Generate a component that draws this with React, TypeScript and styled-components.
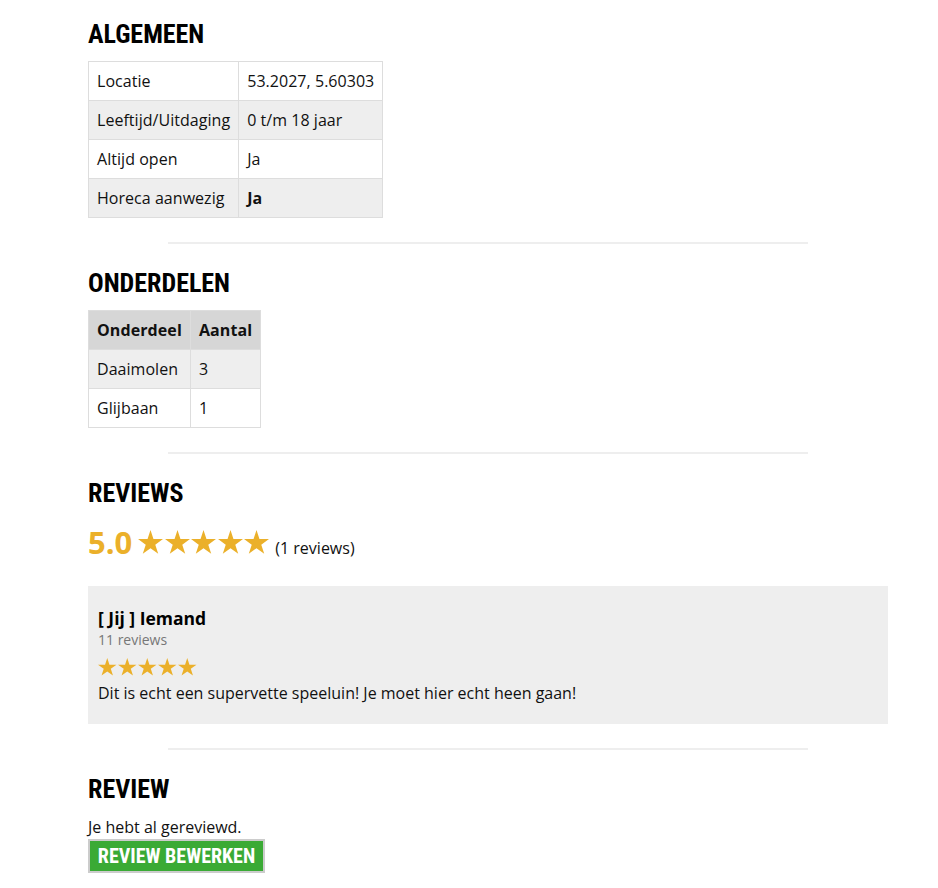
import React from "react";
import styled, { createGlobalStyle } from "styled-components";

const GlobalStyle = createGlobalStyle`
  html, body { margin: 0; padding: 0; background: #fff; }
  body {
    font-family: "Open Sans", "Liberation Sans", sans-serif;
    font-size: 16px;
    line-height: 22px;
    color: #111;
  }
`;

const Page = styled.div`
  width: 800px;
  padding: 19px 88px 20px;
`;

const Heading = styled.h2`
  margin: 0 0 12px;
  font-family: "Roboto Condensed", Roboto, "Liberation Sans", sans-serif;
  font-stretch: condensed;
  font-weight: 700;
  font-size: 26px;
  line-height: 30px;
  color: #000;
  text-transform: uppercase;
`;

const Divider = styled.hr`
  width: 640px;
  margin: 24px auto 24px;
  border: 0;
  border-top: 2px solid #eee;
  height: 0;
`;

const Table = styled.table`
  border-collapse: collapse;
  letter-spacing: 0.04px;
`;

const Row = styled.tr<{ $shade?: "none" | "light" | "dark" }>`
  background: ${(p) =>
    p.$shade === "light" ? "#eee" : p.$shade === "dark" ? "#d6d6d6" : "#fff"};
`;

const Cell = styled.td<{ $bold?: boolean }>`
  border: 1px solid #ddd;
  padding: 8px;
  font-weight: ${(p) => (p.$bold ? 700 : 400)};
  white-space: nowrap;
`;

const HeadCell = styled.th`
  border: 1px solid #ddd;
  padding: 8px;
  font-weight: 700;
  text-align: left;
  letter-spacing: 0.1px;
`;

const RatingRow = styled.div`
  display: flex;
  align-items: baseline;
  margin: 14px 0 18px;
  line-height: 40px;
`;

const Score = styled.span`
  font-size: 31px;
  font-weight: 700;
  color: #ebb02a;
  margin-right: 6px;
`;

const Stars = styled.span<{ $gap: number }>`
  display: inline-flex;
  gap: ${(p) => p.$gap}px;
`;

const Count = styled.span`
  margin-left: 6px;
  font-size: 16px;
`;

const ReviewBox = styled.div`
  background: #eee;
  padding: 20px 10px;
`;

const ReviewerName = styled.div`
  font-size: 17.5px;
  line-height: 24px;
  font-weight: 700;
  color: #000;
`;

const ReviewerCount = styled.div`
  font-size: 14px;
  line-height: 20px;
  color: #777;
`;

const ReviewStars = styled.div`
  margin: 8px 0 7px;
  display: flex;
  height: 17px;
`;

const ReviewText = styled.p`
  margin: 0;
`;

const Note = styled.p`
  margin: 0;
`;

const Button = styled.button`
  display: block;
  margin-top: 1px;
  height: 34px;
  width: 177px;
  padding: 0;
  background: #3aaa35;
  border: 2px solid #ccc;
  color: #fff;
  font-family: "Roboto Condensed", Roboto, "Liberation Sans", sans-serif;
  font-stretch: condensed;
  font-weight: 700;
  font-size: 20px;
  line-height: 30px;
  text-transform: uppercase;
  cursor: pointer;
`;

const Star: React.FC<{ size: number }> = ({ size }) => {
  const R = 50;
  const r = R * 0.382;
  const pts: string[] = [];
  for (let i = 0; i < 10; i++) {
    const rad = i % 2 === 0 ? R : r;
    const a = (Math.PI / 5) * i - Math.PI / 2;
    pts.push(`${(50 + rad * Math.cos(a)).toFixed(2)},${(50 + rad * Math.sin(a)).toFixed(2)}`);
  }
  return (
    <svg width={size} height={size * 0.951} viewBox="2.45 0 95.1 90.45">
      <polygon points={pts.join(" ")} fill="#ebb02a" />
    </svg>
  );
};

const StarRow: React.FC<{ size: number; gap: number }> = ({ size, gap }) => (
  <Stars $gap={gap}>
    {[0, 1, 2, 3, 4].map((i) => (
      <Star key={i} size={size} />
    ))}
  </Stars>
);

export default function App() {
  return (
    <>
      <GlobalStyle />
      <Page>
        <Heading>Algemeen</Heading>
        <Table>
          <tbody>
            <Row>
              <Cell>Locatie</Cell>
              <Cell>53.2027, 5.60303</Cell>
            </Row>
            <Row $shade="light">
              <Cell>Leeftijd/Uitdaging</Cell>
              <Cell>0 t/m 18 jaar</Cell>
            </Row>
            <Row>
              <Cell>Altijd open</Cell>
              <Cell>Ja</Cell>
            </Row>
            <Row $shade="light">
              <Cell>Horeca aanwezig</Cell>
              <Cell $bold>Ja</Cell>
            </Row>
          </tbody>
        </Table>

        <Divider />

        <Heading>Onderdelen</Heading>
        <Table>
          <thead>
            <Row $shade="dark">
              <HeadCell>Onderdeel</HeadCell>
              <HeadCell>Aantal</HeadCell>
            </Row>
          </thead>
          <tbody>
            <Row $shade="light">
              <Cell>Daaimolen</Cell>
              <Cell>3</Cell>
            </Row>
            <Row>
              <Cell>Glijbaan</Cell>
              <Cell>1</Cell>
            </Row>
          </tbody>
        </Table>

        <Divider />

        <Heading>Reviews</Heading>
        <RatingRow>
          <Score>5.0</Score>
          <StarRow size={25} gap={1.5} />
          <Count>(1 reviews)</Count>
        </RatingRow>

        <ReviewBox>
          <ReviewerName>[ Jij ] Iemand</ReviewerName>
          <ReviewerCount>11 reviews</ReviewerCount>
          <ReviewStars>
            <StarRow size={18.5} gap={1.5} />
          </ReviewStars>
          <ReviewText>Dit is echt een supervette speeluin! Je moet hier echt heen gaan!</ReviewText>
        </ReviewBox>

        <Divider />

        <Heading>Review</Heading>
        <Note>Je hebt al gereviewd.</Note>
        <Button type="button">Review bewerken</Button>
      </Page>
    </>
  );
}
